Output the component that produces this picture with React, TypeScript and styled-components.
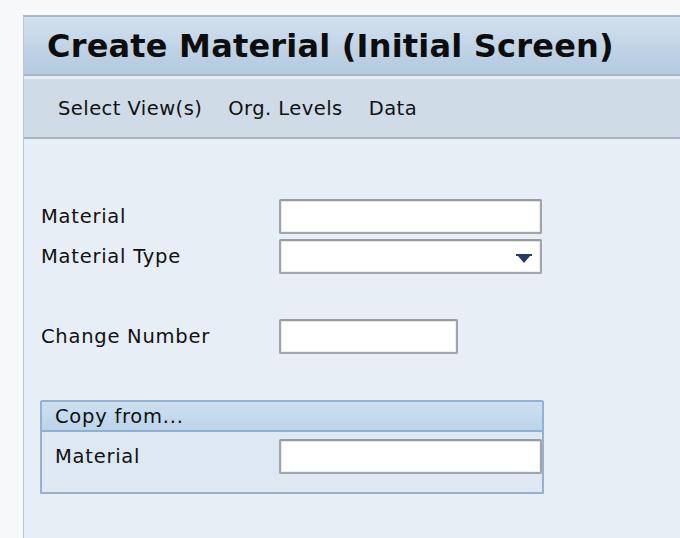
import React from "react";
import styled, { createGlobalStyle } from "styled-components";

const GlobalStyle = createGlobalStyle`
  html, body {
    margin: 0;
    padding: 0;
    background: #f7f8fa;
    font-family: "DejaVu Sans", "Liberation Sans", sans-serif;
    color: #111;
  }
`;

const Page = styled.div`
  width: 680px;
  height: 538px;
  overflow: hidden;
  padding: 15px 0 0 23px;
  box-sizing: border-box;
`;

const Frame = styled.div`
  height: 100%;
  border-left: 1px solid #b9c6d3;
  border-top: 2px solid #a9b7c6;
  background: #e8eef5;
  display: flex;
  flex-direction: column;
`;

const TitleBar = styled.div`
  height: 57px;
  background: linear-gradient(#d2e1ee, #b2c9df);
  border-bottom: 2px solid #a8b6c4;
  box-shadow: 0 1px 0 #e3ebf2;
  display: flex;
  align-items: center;
  padding-left: 23px;
`;

const Title = styled.h1`
  margin: 0;
  font-size: 32px;
  font-weight: bold;
  letter-spacing: 0.2px;
  color: #0d0d0d;
`;

const Toolbar = styled.div`
  margin-top: 3px;
  height: 58px;
  background: #cfdce7;
  border-bottom: 2px solid #a8b6c4;
  display: flex;
  align-items: center;
  padding-left: 34px;
  gap: 26px;
`;

const MenuItem = styled.span`
  font-size: 19.5px;
  letter-spacing: 0.45px;
  color: #111;
`;

const Content = styled.div`
  padding: 60px 0 0 17px;
  display: flex;
  flex-direction: column;
`;

const Row = styled.div<{ $gap?: number }>`
  display: flex;
  align-items: center;
  height: 35px;
  margin-top: ${(p) => p.$gap ?? 0}px;
`;

const Label = styled.label<{ $width: number }>`
  width: ${(p) => p.$width}px;
  font-size: 19.5px;
  letter-spacing: 0.75px;
  color: #111;
  flex-shrink: 0;
`;

const Input = styled.div<{ $width: number }>`
  position: relative;
  width: ${(p) => p.$width}px;
  height: 35px;
  box-sizing: border-box;
  background: #fff;
  border: 2px solid #a3a6a9;
  border-top-color: #999c9f;
  border-radius: 2px;
  box-shadow: inset 1px 1px 0 #e2e4e6, inset -1px -1px 0 #eceeef;
`;

const Arrow = styled.svg`
  position: absolute;
  right: 8px;
  top: 13px;
`;

const Group = styled.div`
  margin: 46px 0 0 -1px;
  width: 504px;
  box-sizing: border-box;
  border: 2px solid #94b2d0;
  border-radius: 2px 2px 0 0;
  background: #dde8f2;
  padding-bottom: 18px;
`;

const GroupHeader = styled.div`
  height: 28px;
  background: linear-gradient(#cde0f1, #bcd3e9);
  border-bottom: 2px solid #8fb0cf;
  display: flex;
  align-items: center;
  padding-left: 13px;
  font-size: 19.5px;
  letter-spacing: 0.75px;
  color: #111;
`;

const GroupBody = styled.div`
  padding: 7px 0 0 13px;
`;

export default function App() {
  return (
    <>
      <GlobalStyle />
      <Page>
        <Frame>
          <TitleBar>
            <Title>Create Material (Initial Screen)</Title>
          </TitleBar>
          <Toolbar>
            <MenuItem>Select View(s)</MenuItem>
            <MenuItem>Org. Levels</MenuItem>
            <MenuItem>Data</MenuItem>
          </Toolbar>
          <Content>
            <Row>
              <Label $width={238}>Material</Label>
              <Input $width={263} />
            </Row>
            <Row $gap={5}>
              <Label $width={238}>Material Type</Label>
              <Input $width={263}>
                <Arrow width="16" height="9" viewBox="0 0 16 9">
                  <path d="M0 0H16V2H14L8 9L2 2H0Z" fill="#263a68" />
                </Arrow>
              </Input>
            </Row>
            <Row $gap={45}>
              <Label $width={238}>Change Number</Label>
              <Input $width={179} />
            </Row>
            <Group>
              <GroupHeader>Copy from...</GroupHeader>
              <GroupBody>
                <Row>
                  <Label $width={224}>Material</Label>
                  <Input $width={263} />
                </Row>
              </GroupBody>
            </Group>
          </Content>
        </Frame>
      </Page>
    </>
  );
}
